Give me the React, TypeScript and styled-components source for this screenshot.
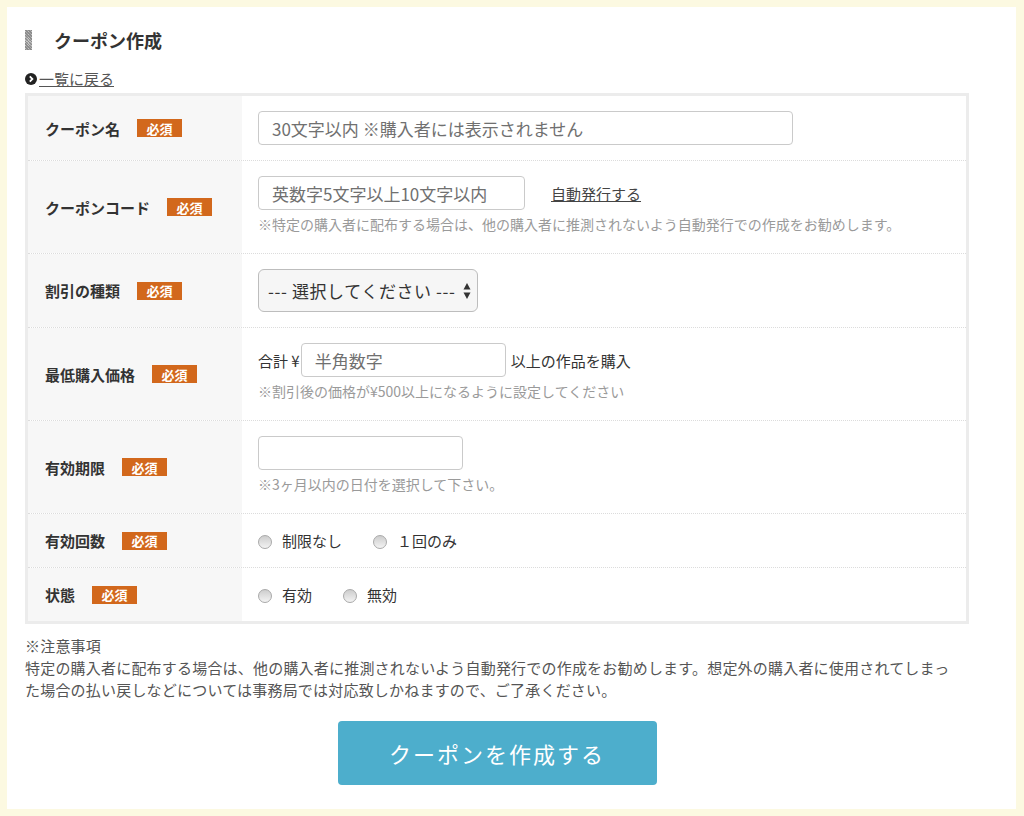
import styled, { createGlobalStyle } from "styled-components";

const GlobalStyle = createGlobalStyle`
  html, body {
    margin: 0;
    padding: 0;
  }
  body {
    background: #fcf9e1;
    font-family: "Noto Sans CJK JP", "Noto Sans", sans-serif;
    color: #333;
  }
`;

const Page = styled.div`
  padding: 7px 8px 8px 7px;
`;

const Panel = styled.main`
  background: #fff;
  padding: 23px 47px 24px 18px;
`;

const Heading = styled.h1`
  display: flex;
  align-items: center;
  height: 20px;
  margin: 0;
  font-size: 18px;
  font-weight: bold;
  color: #333;
`;

const HeadingMark = styled.span`
  width: 7px;
  height: 20px;
  margin-right: 22px;
  background-color: #c4c4c4;
  background-image: repeating-linear-gradient(
      45deg,
      #8c8c8c 0 1px,
      transparent 1px 2px
    ),
    repeating-linear-gradient(-45deg, #a8a8a8 0 1px, transparent 1px 2px);
`;

const BackRow = styled.div`
  margin-top: 18px;
  line-height: 20px;
`;

const BackLink = styled.a`
  display: inline-flex;
  align-items: center;
  font-size: 15px;
  color: #555;
  text-decoration: none;
  cursor: pointer;

  span {
    text-decoration: underline;
  }
`;

const FormTable = styled.div`
  margin-top: 4px;
  border: 3px solid #ececec;
`;

const Row = styled.div`
  display: grid;
  grid-template-columns: 214px 1fr;

  & + & {
    border-top: 1px dotted #dcdcdc;
  }
`;

const LabelCell = styled.div`
  display: flex;
  align-items: center;
  padding-left: 17px;
  background: #f7f7f7;
  font-size: 15px;
  font-weight: bold;
  color: #333;
`;

const Badge = styled.span`
  display: inline-flex;
  align-items: center;
  justify-content: center;
  width: 45px;
  height: 18px;
  margin-left: 17px;
  background: #d2681c;
  color: #fff;
  font-size: 13px;
  font-weight: bold;
`;

const FieldCell = styled.div`
  padding: 15px 16px;
`;

const Inline = styled.div`
  display: flex;
  align-items: center;
  font-size: 15px;
`;

const TextInput = styled.input<{ $w: number }>`
  box-sizing: border-box;
  width: ${(p) => p.$w}px;
  height: 34px;
  margin: 0;
  padding: 0 13px;
  border: 1px solid #cacaca;
  border-radius: 4px;
  font-family: inherit;
  font-size: 17px;
  color: #333;
  outline: none;

  &::placeholder {
    color: #707070;
  }
`;

const AutoLink = styled.a`
  margin-left: 26px;
  font-size: 15px;
  color: #444;
  text-decoration: underline;
  cursor: pointer;
`;

const Note = styled.div`
  font-size: 14px;
  line-height: 28px;
  color: #9a9a9a;
`;

const Unit = styled.span<{ $gap?: number }>`
  margin-left: ${(p) => p.$gap || 0}px;
  margin-right: 1px;
  color: #333;
`;

const SelectBox = styled.div`
  position: relative;
  width: 220px;
  height: 43px;
`;

const Select = styled.select`
  appearance: none;
  box-sizing: border-box;
  width: 100%;
  height: 100%;
  margin: 0;
  padding: 0 0 0 9px;
  border: 1px solid #bdbdbd;
  border-radius: 6px;
  background: #f6f6f6;
  font-family: inherit;
  font-size: 17px;
  letter-spacing: 0.6px;
  color: #333;
  outline: none;
`;

const SelectArrow = styled.svg`
  position: absolute;
  right: 7px;
  top: 50%;
  transform: translateY(-50%);
  pointer-events: none;
`;

const RadioGroup = styled.div`
  display: flex;
  align-items: center;
  height: 23px;
  font-size: 15px;
  color: #333;
`;

const RadioLabel = styled.label`
  display: inline-flex;
  align-items: center;
  gap: 10px;
  margin-right: 31px;
`;

const Radio = styled.input`
  appearance: none;
  width: 14px;
  height: 14px;
  margin: 3px 0 0;
  border: 1px solid #a9a9a9;
  border-radius: 50%;
  background: linear-gradient(#cdcdcd, #f3f3f3);
`;

const Notice = styled.div`
  max-width: 935px;
  margin-top: 11px;
  font-size: 15px;
  line-height: 22px;
  letter-spacing: 0.2px;
  color: #555;
`;

const SubmitButton = styled.button`
  display: block;
  width: 319px;
  height: 64px;
  margin: 20px auto 0;
  border: none;
  border-radius: 4px;
  background: #4daecc;
  color: #fff;
  font-family: inherit;
  font-size: 22px;
  letter-spacing: 2px;
  cursor: pointer;
`;

const CircleArrow = () => (
  <svg width="12" height="12" viewBox="0 0 12 12" style={{ marginRight: 2 }}>
    <circle cx="6" cy="6" r="6" fill="#222" />
    <path
      d="M4.8 3.4 L7.4 6 L4.8 8.6"
      fill="none"
      stroke="#fff"
      strokeWidth="1.8"
    />
  </svg>
);

const Required = () => <Badge>必須</Badge>;

export default function App() {
  return (
    <>
      <GlobalStyle />
      <Page>
        <Panel>
          <Heading>
            <HeadingMark />
            クーポン作成
          </Heading>
          <BackRow>
            <BackLink>
              <CircleArrow />
              <span>一覧に戻る</span>
            </BackLink>
          </BackRow>

          <FormTable>
            <Row>
              <LabelCell>
                クーポン名
                <Required />
              </LabelCell>
              <FieldCell>
                <TextInput
                  $w={535}
                  type="text"
                  placeholder="30文字以内 ※購入者には表示されません"
                />
              </FieldCell>
            </Row>

            <Row>
              <LabelCell>
                クーポンコード
                <Required />
              </LabelCell>
              <FieldCell>
                <Inline>
                  <TextInput
                    $w={267}
                    type="text"
                    placeholder="英数字5文字以上10文字以内"
                  />
                  <AutoLink>自動発行する</AutoLink>
                </Inline>
                <Note>
                  ※特定の購入者に配布する場合は、他の購入者に推測されないよう自動発行での作成をお勧めします。
                </Note>
              </FieldCell>
            </Row>

            <Row>
              <LabelCell>
                割引の種類
                <Required />
              </LabelCell>
              <FieldCell>
                <SelectBox>
                  <Select defaultValue="">
                    <option value="">--- 選択してください ---</option>
                    <option value="yen">金額割引</option>
                    <option value="rate">割合割引</option>
                  </Select>
                  <SelectArrow width="8" height="18" viewBox="0 0 8 18">
                    <path d="M4 1 L7.5 7.5 L0.5 7.5 Z" fill="#333" />
                    <path d="M4 17 L7.5 10.5 L0.5 10.5 Z" fill="#333" />
                  </SelectArrow>
                </SelectBox>
              </FieldCell>
            </Row>

            <Row>
              <LabelCell>
                最低購入価格
                <Required />
              </LabelCell>
              <FieldCell>
                <Inline>
                  <Unit>合計 ¥</Unit>
                  <TextInput $w={205} type="text" placeholder="半角数字" />
                  <Unit $gap={5}>以上の作品を購入</Unit>
                </Inline>
                <Note>※割引後の価格が¥500以上になるように設定してください</Note>
              </FieldCell>
            </Row>

            <Row>
              <LabelCell>
                有効期限
                <Required />
              </LabelCell>
              <FieldCell>
                <TextInput $w={205} type="text" />
                <Note>※3ヶ月以内の日付を選択して下さい。</Note>
              </FieldCell>
            </Row>

            <Row>
              <LabelCell>
                有効回数
                <Required />
              </LabelCell>
              <FieldCell>
                <RadioGroup>
                  <RadioLabel>
                    <Radio type="radio" name="count" />
                    制限なし
                  </RadioLabel>
                  <RadioLabel>
                    <Radio type="radio" name="count" />
                    １回のみ
                  </RadioLabel>
                </RadioGroup>
              </FieldCell>
            </Row>

            <Row>
              <LabelCell>
                状態
                <Required />
              </LabelCell>
              <FieldCell>
                <RadioGroup>
                  <RadioLabel>
                    <Radio type="radio" name="status" />
                    有効
                  </RadioLabel>
                  <RadioLabel>
                    <Radio type="radio" name="status" />
                    無効
                  </RadioLabel>
                </RadioGroup>
              </FieldCell>
            </Row>
          </FormTable>

          <Notice>
            ※注意事項
            <br />
            特定の購入者に配布する場合は、他の購入者に推測されないよう自動発行での作成をお勧めします。想定外の購入者に使用されてしまった場合の払い戻しなどについては事務局では対応致しかねますので、ご了承ください。
          </Notice>

          <SubmitButton type="button">クーポンを作成する</SubmitButton>
        </Panel>
      </Page>
    </>
  );
}
